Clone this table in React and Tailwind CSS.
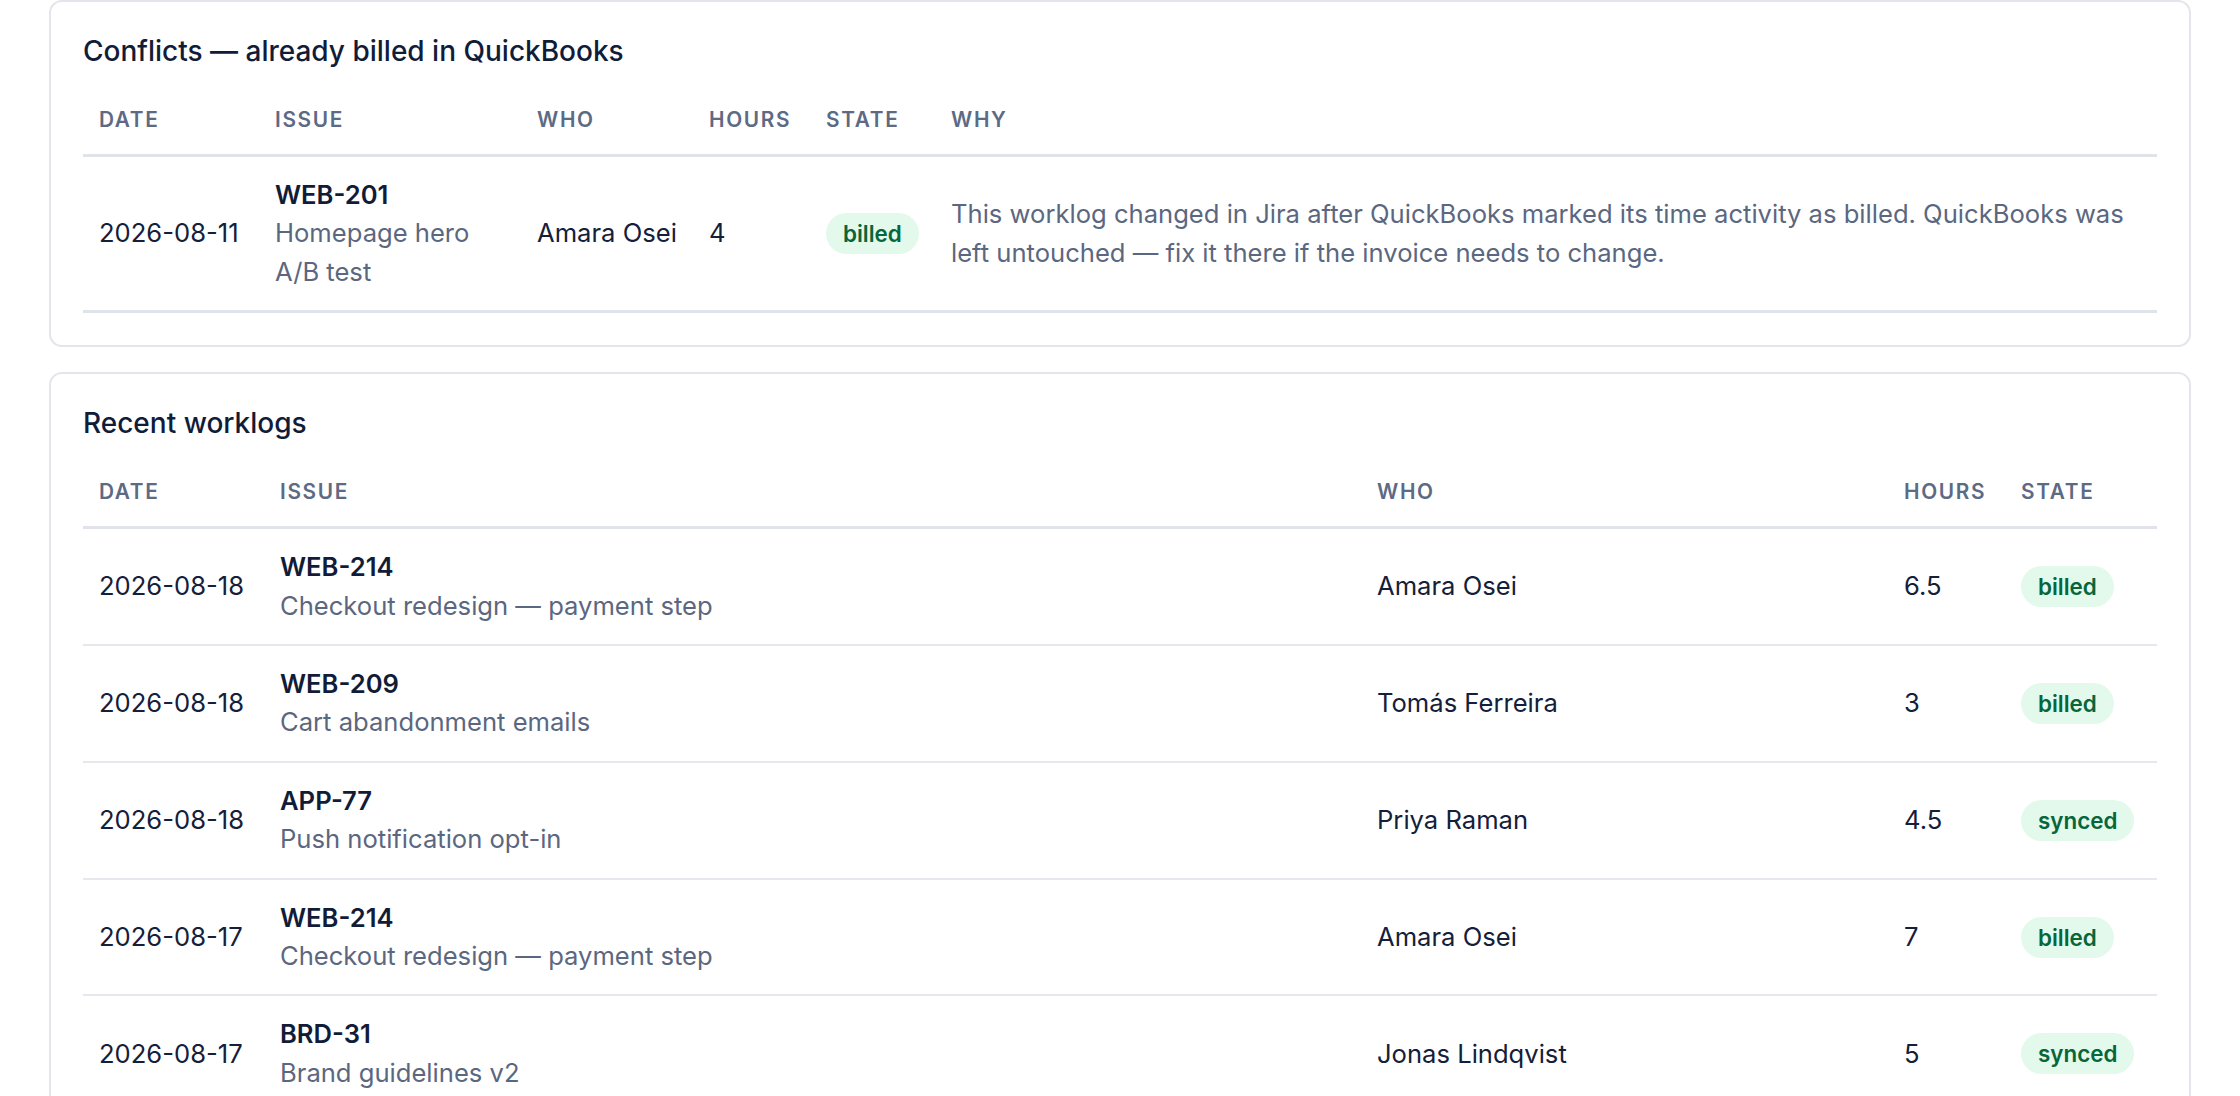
const conflicts = [
  {
    date: '2026-08-11',
    key: 'WEB-201',
    summary: 'Homepage hero A/B test',
    who: 'Amara Osei',
    hours: '4',
    state: 'billed',
    why: 'This worklog changed in Jira after QuickBooks marked its time activity as billed. QuickBooks was left untouched — fix it there if the invoice needs to change.',
  },
]

const worklogs = [
  { date: '2026-08-18', key: 'WEB-214', summary: 'Checkout redesign — payment step', who: 'Amara Osei', hours: '6.5', state: 'billed' },
  { date: '2026-08-18', key: 'WEB-209', summary: 'Cart abandonment emails', who: 'Tomás Ferreira', hours: '3', state: 'billed' },
  { date: '2026-08-18', key: 'APP-77', summary: 'Push notification opt-in', who: 'Priya Raman', hours: '4.5', state: 'synced' },
  { date: '2026-08-17', key: 'WEB-214', summary: 'Checkout redesign — payment step', who: 'Amara Osei', hours: '7', state: 'billed' },
  { date: '2026-08-17', key: 'BRD-31', summary: 'Brand guidelines v2', who: 'Jonas Lindqvist', hours: '5', state: 'synced' },
]

function Badge({ state }) {
  return (
    <span className="inline-block rounded-full bg-[#e2f9ec] px-[17px] py-[5px] text-[22.4px] leading-[31px] font-semibold text-[#07663a]">
      {state}
    </span>
  )
}

function Th({ children }) {
  return (
    <th className="border-b-[3px] border-[#e0e3e9] px-[16px] py-[19px] text-left align-middle text-[20.8px] leading-[31px] font-semibold uppercase tracking-[0.08em] text-[#5d6a84]">
      {children}
    </th>
  )
}

function Issue({ id, summary }) {
  return (
    <div>
      <div className="font-semibold text-[#111c38]">{id}</div>
      <div className="text-[#5b6780]">{summary}</div>
    </div>
  )
}

function Card({ title, children }) {
  return (
    <section className="rounded-[13px] border-2 border-[#e3e5ea] bg-white p-[32px]">
      <h2 className="mb-[16px] text-[28px] leading-[35px] font-medium text-[#111c38]">{title}</h2>
      {children}
    </section>
  )
}

export default function App() {
  const td = 'px-[16px] py-[19px] align-middle'

  return (
    <div className="min-h-screen bg-white px-[49px] font-['Inter',sans-serif] text-[25.6px] leading-[38.4px] text-[#142039]">
      <div className="flex flex-col gap-[25px]">
        {/* Conflicts */}
        <Card title="Conflicts — already billed in QuickBooks">
          <table className="w-full table-fixed border-collapse">
            <colgroup>
              <col className="w-[176px]" />
              <col className="w-[262px]" />
              <col className="w-[172px]" />
              <col className="w-[117px]" />
              <col className="w-[125px]" />
              <col />
            </colgroup>
            <thead>
              <tr>
                <Th>Date</Th>
                <Th>Issue</Th>
                <Th>Who</Th>
                <Th>Hours</Th>
                <Th>State</Th>
                <Th>Why</Th>
              </tr>
            </thead>
            <tbody>
              {conflicts.map((c) => (
                <tr key={c.key} className="border-b-[3px] border-[#e0e3e9]">
                  <td className={td}>{c.date}</td>
                  <td className={td}><Issue id={c.key} summary={c.summary} /></td>
                  <td className={td}>{c.who}</td>
                  <td className={td}>{c.hours}</td>
                  <td className={td}><Badge state={c.state} /></td>
                  <td className={`${td} text-[#5b6780]`}>{c.why}</td>
                </tr>
              ))}
            </tbody>
          </table>
        </Card>

        {/* Recent worklogs */}
        <Card title="Recent worklogs">
          <table className="w-full table-fixed border-collapse">
            <colgroup>
              <col className="w-[181px]" />
              <col />
              <col className="w-[527px]" />
              <col className="w-[117px]" />
              <col className="w-[152px]" />
            </colgroup>
            <thead>
              <tr>
                <Th>Date</Th>
                <Th>Issue</Th>
                <Th>Who</Th>
                <Th>Hours</Th>
                <Th>State</Th>
              </tr>
            </thead>
            <tbody>
              {worklogs.map((w, i) => (
                <tr key={i} className="border-b-2 border-[#e6e8ed]">
                  <td className={td}>{w.date}</td>
                  <td className={td}><Issue id={w.key} summary={w.summary} /></td>
                  <td className={td}>{w.who}</td>
                  <td className={td}>{w.hours}</td>
                  <td className={td}><Badge state={w.state} /></td>
                </tr>
              ))}
            </tbody>
          </table>
        </Card>
      </div>
    </div>
  )
}
